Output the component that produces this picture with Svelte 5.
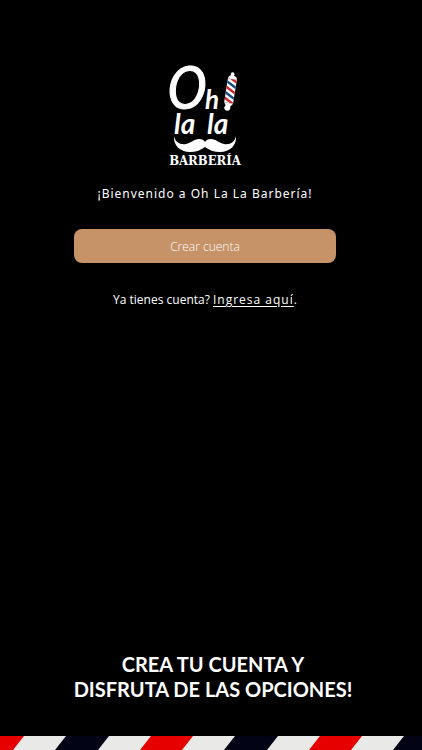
<script lang="ts">
  export let brand = 'Oh La La Barbería';

  function createAccount(): void {
    window.location.hash = 'registro';
  }
</script>

<main class="welcome">
  <section class="intro">
    <svg class="logo" viewBox="0 0 76 106" role="img" aria-label={brand}>
      <g class="script">
        <text class="capital" x="1" y="46" transform="rotate(-5 20 30)">O</text>
        <text class="small-h" x="38" y="47">h</text>
        <text class="lala" x="7" y="72">la</text>
        <text class="lala" x="40" y="72">la</text>
      </g>

      <!-- barber pole -->
      <g transform="translate(63 29) rotate(9)">
        <defs>
          <clipPath id="pole">
            <rect x="-4" y="-12" width="9" height="24" />
          </clipPath>
        </defs>
        <path
          fill="#fff"
          d="M0-19a2 2 0 0 1 1.500 3.200C4-15.500 5-14 5-12H-4c0-2 1-3.500 2.500-3.800A2 2 0 0 1 0-19Z"
        />
        <rect x="-4" y="-12" width="9" height="24" fill="#fff" />
        <g clip-path="url(#pole)" stroke-width="2.400">
          <path stroke="#d3222d" d="M-5-15 6-9M-5-4 6 2M-5 7 6 13" />
          <path stroke="#174784" d="M-5-9.500 6-3.500M-5 1.500 6 7.500" />
        </g>
        <path fill="#fff" d="M-4 12H5l-2 3H-2Z" />
        <circle cx="0" cy="17" r="3" fill="#fff" />
      </g>

      <!-- moustache -->
      <path
        fill="#fff"
        d="M7 74c1 6 6 9 12 8 5-1 8-5 13-5 3 0 5 1 6 3 1-2 3-3 6-3 5 0 8 4 13 5 6 1 11-2 12-8 1 9-6 16-16 16-6 0-11-2-15-5-4 3-9 5-15 5C13 90 6 83 7 74Z"
      />
      <text class="barberia" x="38" y="103" text-anchor="middle">BARBERÍA</text>
    </svg>

    <h1>¡Bienvenido a {brand}!</h1>

    <button type="button" on:click={createAccount}>Crear cuenta</button>

    <p class="login">Ya tienes cuenta? <a href="#ingresar">Ingresa aquí</a>.</p>
  </section>

  <footer>
    <h2>CREA TU CUENTA Y<br />DISFRUTA DE LAS OPCIONES!</h2>
    <svg class="stripes" width="100%" height="14" aria-hidden="true">
      <defs>
        <pattern id="stripes" width="169" height="14" patternUnits="userSpaceOnUse">
          <rect width="169" height="14" fill="#e9e9e7" />
          <path fill="#e60000" d="M-18 0H24L13 14H-29ZM151 0H193L182 14H140Z" />
          <path fill="#020415" d="M66 0H109L98 14H55Z" />
        </pattern>
      </defs>
      <rect width="100%" height="14" fill="url(#stripes)" />
    </svg>
  </footer>
</main>

<style>
  :global(body) {
    margin: 0;
    background: #000;
  }

  .welcome {
    box-sizing: border-box;
    min-height: 100vh;
    display: flex;
    flex-direction: column;
    justify-content: space-between;
    background: #000;
    color: #fff;
    font-family: 'Open Sans', 'Noto Sans', sans-serif;
  }

  .intro {
    display: flex;
    flex-direction: column;
    align-items: center;
    padding: 62px 12px 0 0;
  }

  .logo {
    display: block;
    width: 76px;
    height: 106px;
    overflow: visible;
  }

  .script {
    fill: #fff;
    font-family: Lato, sans-serif;
    font-style: italic;
    font-weight: 700;
  }

  .capital {
    font-family: 'DejaVu Sans Condensed', sans-serif;
    font-size: 56px;
    font-weight: 400;
    stroke: #fff;
    stroke-width: 1px;
  }

  .small-h {
    font-size: 26px;
  }

  .lala {
    font-size: 28px;
  }

  .barberia {
    fill: #fff;
    font-family: 'DejaVu Serif Condensed', 'DejaVu Serif', serif;
    font-size: 13px;
    font-weight: 700;
  }

  h1 {
    margin: 16px 0 0;
    font-family: 'Noto Sans', sans-serif;
    font-size: 12px;
    font-weight: 400;
    line-height: 20px;
    letter-spacing: 1px;
  }

  button {
    width: 64%;
    height: 34px;
    margin-top: 25px;
    padding: 0;
    border: none;
    border-radius: 8px;
    background: #c69268;
    color: #fff;
    font-family: inherit;
    font-size: 12px;
    font-weight: 300;
    cursor: pointer;
  }

  .login {
    margin: 27px 0 0;
    font-size: 12px;
    line-height: 20px;
  }

  .login a {
    color: inherit;
    letter-spacing: 1px;
    text-underline-offset: 2px;
  }

  h2 {
    margin: 24px 0 34px;
    padding-left: 4px;
    font-family: Lato, sans-serif;
    font-size: 20px;
    font-weight: 700;
    line-height: 25px;
    text-align: center;
  }

  .stripes {
    display: block;
  }
</style>
